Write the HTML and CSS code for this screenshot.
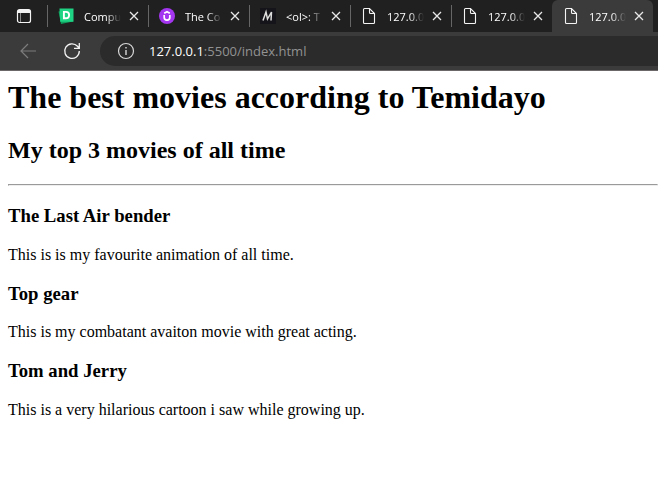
FILE: index.html
```html
<!DOCTYPE html>
<html lang="en">
<head>
<meta charset="utf-8">
<title>The best movies according to Temidayo</title>
<link rel="stylesheet" href="styles.css">
</head>
<body>
<svg class="sprite">
  <symbol id="page" viewBox="0 0 16 18"><path d="M3.500 1.500H8.500L13.500 6.500v9q0 1-1 1h-9q-1 0-1-1v-13q0-1 1-1zM8.500 1.500v4q0 1 1 1h4" fill="none" stroke="#f4f4f4" stroke-width="1.100"/></symbol>
  <symbol id="cross" viewBox="0 0 10 10"><path d="M1 1l8 8M9 1L1 9" fill="none" stroke="#e8e8e8" stroke-width="1.300"/></symbol>
</svg>
<header class="browser">
  <nav class="tabs" aria-label="Tabs">
    <button class="tab-menu" aria-label="Tab actions"><svg width="16" height="16" viewBox="0 0 16 16"><rect x="1.500" y="1.500" width="13" height="13" rx="2" fill="none" stroke="#f4f4f4" stroke-width="1.200"/><path d="M2 2h12v3H2z" fill="#f4f4f4"/><path d="M4.500 5v9" stroke="#8a8a8a"/></svg></button>
    <div class="tab">
      <button class="tab-open"><svg class="favicon" viewBox="0 0 16 18"><path d="M.5 4.500L13 2l2 12.500L3 17z" fill="#109d5d"/><path d="M1.500 1.500h14v13.300H2.200z" fill="#1ed384"/><path d="M5.900 4.900h2q3.200 0 3.200 3.200t-3.200 3.200h-2z" fill="none" stroke="#fff" stroke-width="1.900"/></svg><span class="title">Compu</span></button>
      <button class="close" aria-label="Close tab"><svg width="10" height="10"><use href="#cross"/></svg></button>
    </div>
    <div class="tab">
      <button class="tab-open"><svg class="favicon" viewBox="0 0 16 18"><circle cx="8" cy="9" r="8" fill="#a435f0"/><path d="M5.200 8v2.600q0 2.600 2.800 2.600t2.800-2.600V8M5.200 6.300L8 4.700l2.800 1.600" fill="none" stroke="#fff" stroke-width="1.700"/></svg><span class="title">The Co</span></button>
      <button class="close" aria-label="Close tab"><svg width="10" height="10"><use href="#cross"/></svg></button>
    </div>
    <div class="tab">
      <button class="tab-open"><svg class="favicon" viewBox="0 0 16 18"><path d="M0 1h16v16H0z" fill="#15141a"/><path d="M3 13.500L6 5l1.500 7L11.500 5l-.5 8.500" fill="none" stroke="#ddd" stroke-width="1.500"/></svg><span class="title">&lt;ol&gt;: T</span></button>
      <button class="close" aria-label="Close tab"><svg width="10" height="10"><use href="#cross"/></svg></button>
    </div>
    <div class="tab">
      <button class="tab-open"><svg class="favicon"><use href="#page"/></svg><span class="title">127.0.0</span></button>
      <button class="close" aria-label="Close tab"><svg width="10" height="10"><use href="#cross"/></svg></button>
    </div>
    <div class="tab">
      <button class="tab-open"><svg class="favicon"><use href="#page"/></svg><span class="title">127.0.0</span></button>
      <button class="close" aria-label="Close tab"><svg width="10" height="10"><use href="#cross"/></svg></button>
    </div>
    <div class="tab active">
      <button class="tab-open"><svg class="favicon"><use href="#page"/></svg><span class="title">127.0.0</span></button>
      <button class="close" aria-label="Close tab"><svg width="10" height="10"><use href="#cross"/></svg></button>
    </div>
  </nav>
  <div class="toolbar">
    <button class="tool" aria-label="Back"><svg width="18" height="18" viewBox="0 0 18 18" fill="none" stroke="#7d7d7d" stroke-width="1.200"><path d="M17 9H2M9 2L2 9l7 7"/></svg></button>
    <button class="tool" aria-label="Refresh"><svg width="18" height="18" viewBox="0 0 18 18" fill="none" stroke="#f4f4f4" stroke-width="1.300"><path d="M16.300 9A7.300 7.300 0 1 1 14.500 4.300L16 6M16.300 1v5.300H11"/></svg></button>
    <div class="address">
      <button class="info" aria-label="Site information"><svg width="18" height="18" viewBox="0 0 18 18"><circle cx="9" cy="9" r="7.500" fill="none" stroke="#d8d8d8" stroke-width="1.200"/><path d="M9 8v5M9 5v1.500" stroke="#d8d8d8" stroke-width="1.400"/></svg></button>
      <span class="url"><span class="host">127.0.0.1</span>:5500/index.html</span>
    </div>
  </div>
</header>
<main>
  <h1>The best movies according to Temidayo</h1>
  <h2>My top 3 movies of all time</h2>
  <hr>
  <h3>The Last Air bender</h3>
  <p>This is is my favourite animation of all time.</p>
  <h3>Top gear</h3>
  <p>This is my combatant avaiton movie with great acting.</p>
  <h3>Tom and Jerry</h3>
  <p>This is a very hilarious cartoon i saw while growing up.</p>
</main>
</body>
</html>
```
FILE: styles.css
```css
* {
  box-sizing: border-box;
}

body {
  margin: 0;
  overflow-x: hidden;
  background: #fff;
  color: #000;
  font-family: "Liberation Serif", "Times New Roman", serif;
}

button {
  display: flex;
  align-items: center;
  padding: 0;
  border: 0;
  background: none;
  color: inherit;
  font: inherit;
}

.sprite {
  display: none;
}

.browser {
  border-bottom: 1px solid #6b6768;
  background: #3b3b3b;
  color: #fff;
  font-family: "Open Sans", "Segoe UI", sans-serif;
}

.tabs {
  display: flex;
  height: 32px;
  background: #202020;
  font-size: 11px;
}

.tab-menu {
  flex: 0 0 47px;
  padding-left: 16px;
}

.tab {
  display: flex;
  flex: 0 0 101px;
  align-items: center;
  padding-left: 10px;
  border-left: 1px solid;
  border-image: linear-gradient(transparent 6px, #666 6px 26px, transparent 26px) 1;
}

.tab.active {
  border: 0;
  padding-left: 11px;
  border-radius: 6px 6px 0 0;
  background: #3b3b3b;
}

.tab-open {
  gap: 10px;
}

.favicon {
  flex: none;
  width: 16px;
  height: 18px;
}

.title {
  width: 37px;
  overflow: hidden;
  text-align: left;
  white-space: nowrap;
  mask-image: linear-gradient(to right, #000 60%, transparent);
}

.close {
  margin-left: 8px;
}

.toolbar {
  display: flex;
  align-items: center;
  height: 38px;
  padding-left: 19px;
}

.tool {
  width: 44px;
}

.address {
  display: flex;
  flex: 1;
  align-items: center;
  gap: 14px;
  height: 30px;
  margin-left: -7px;
  padding-left: 17px;
  border-radius: 15px 0 0 15px;
  background: #2b2b2b;
  font-size: 13px;
}

.url {
  color: #929292;
}

.host {
  color: #fff;
}

main {
  padding: 8px 0 8px 8px;
}

h1 {
  margin-top: 0;
}
```
